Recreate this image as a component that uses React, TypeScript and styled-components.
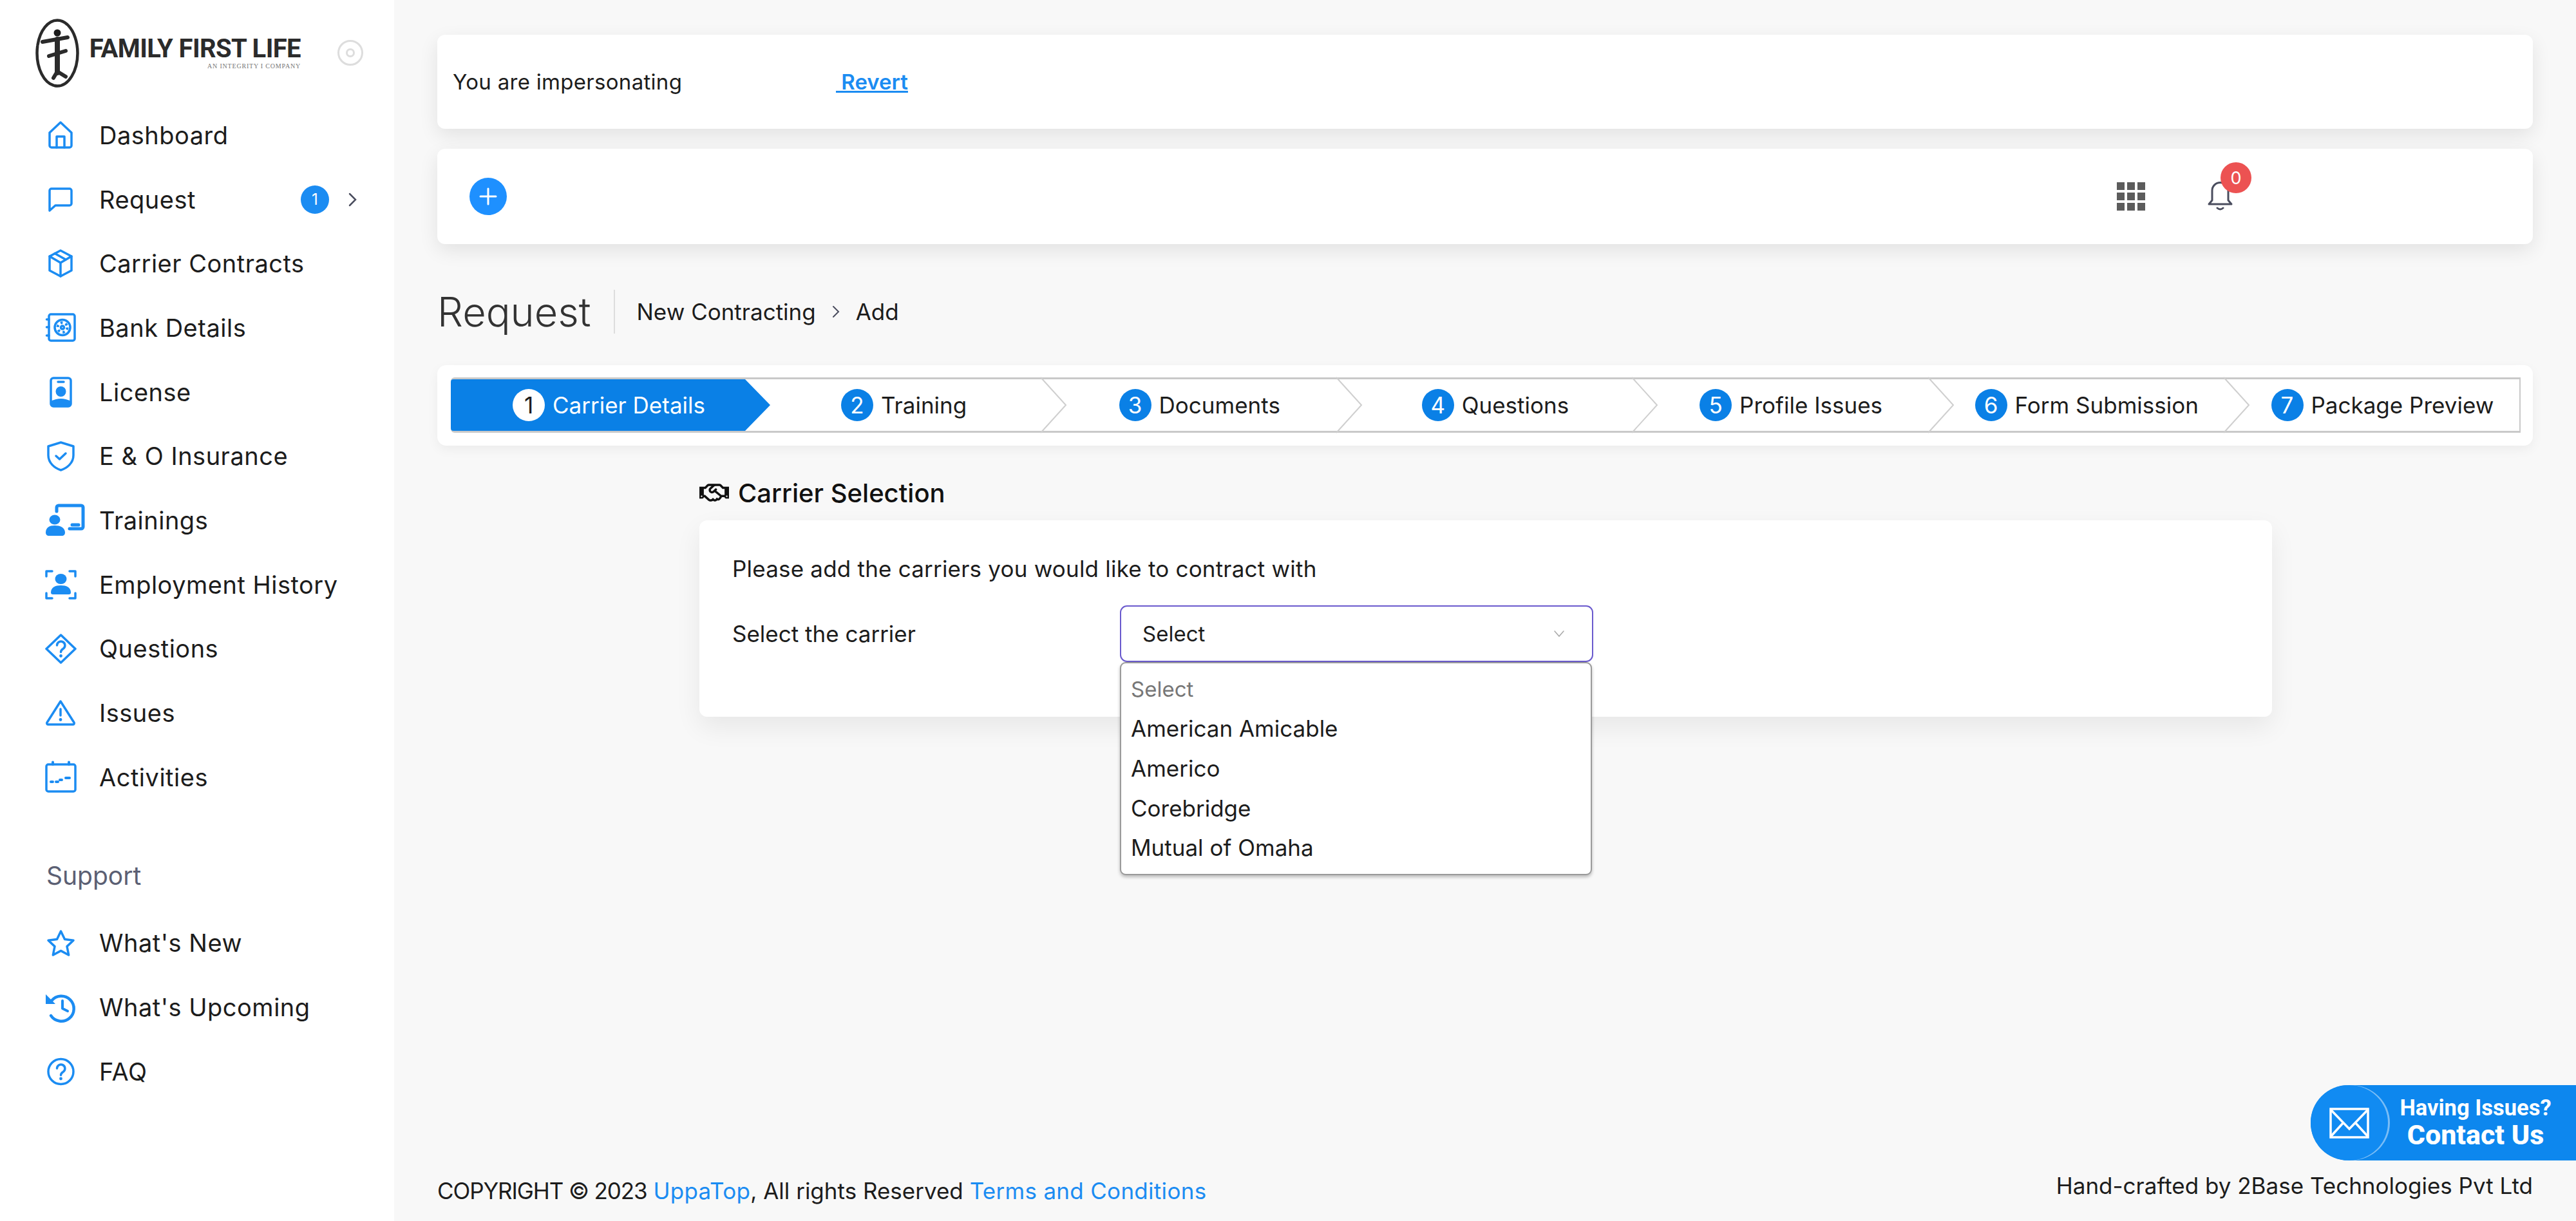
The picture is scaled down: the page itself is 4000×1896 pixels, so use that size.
import React from 'react';
import styled, { createGlobalStyle } from 'styled-components';
import { FaRegHandshake } from 'react-icons/fa';

const BLUE = '#1b8cf2';
const STEP_BLUE = '#0a80e6';
const FONT = `Inter, 'Noto Sans', sans-serif`;

const GlobalStyle = createGlobalStyle`
  html, body {
    margin: 0;
    padding: 0;
    background: #f8f8f8;
    font-family: ${FONT};
    color: #1c1c1c;
  }
  * { box-sizing: border-box; }
`;

const Glyph = styled.svg`
  display: block;
  flex-shrink: 0;
  fill: none;
  stroke: ${BLUE};
  stroke-width: 3.5;
  stroke-linecap: round;
  stroke-linejoin: round;
  overflow: visible;
  .solid { fill: ${BLUE}; stroke: none; }
`;

const icons: Record<string, React.ReactNode> = {
  home: (
    <Glyph width="38" height="43" viewBox="0 0 38 43">
      <path d="M2 18 L19 2 L36 18 V38 a3 3 0 0 1 -3 3 H5 a3 3 0 0 1 -3 -3 Z" />
      <path d="M13 41 V24 H25 V41" />
    </Glyph>
  ),
  chat: (
    <Glyph width="38" height="38" viewBox="0 0 38 38">
      <path d="M2 5 a3 3 0 0 1 3 -3 H33 a3 3 0 0 1 3 3 V25 a3 3 0 0 1 -3 3 H11 L2 36 Z" />
    </Glyph>
  ),
  box: (
    <Glyph width="38" height="44" viewBox="0 0 38 44">
      <path d="M19 2 L36 11 V33 L19 42 L2 33 V11 Z" />
      <path d="M2 11 L19 21 L36 11 M19 21 V42" />
      <path d="M10 6.5 L27 16" />
    </Glyph>
  ),
  safe: (
    <Glyph width="47" height="45" viewBox="0 0 47 45">
      <rect x="5" y="2" width="40" height="41" rx="3" />
      <path d="M1.5 10 H5 M1.5 22 H5 M1.5 35 H5" />
      <circle cx="26" cy="22.5" r="12" />
      <circle cx="26" cy="22.5" r="7.5" strokeDasharray="3.5 4.5" strokeWidth="4" strokeLinecap="butt" />
      <circle cx="26" cy="22.5" r="2.5" />
    </Glyph>
  ),
  license: (
    <Glyph width="35" height="48" viewBox="0 0 35 48">
      <rect x="2" y="2" width="31" height="44" rx="4" />
      <path d="M13 8 H22" />
      <circle className="solid" cx="17.5" cy="23" r="8" />
      <path className="solid" d="M2 38 Q17.5 30 33 38 V43 a3 3 0 0 1 -3 3 H5 a3 3 0 0 1 -3 -3 Z" />
    </Glyph>
  ),
  shield: (
    <Glyph width="43" height="47" viewBox="0 0 43 47">
      <path d="M21.5 2 L41 8 V22 C41 34 31 42 21.5 45 C12 42 2 34 2 22 V8 Z" />
      <path d="M14 23 L19.5 28 L29 19" />
    </Glyph>
  ),
  training: (
    <Glyph width="61" height="49" viewBox="0 0 61 49">
      <path strokeWidth="5" d="M18 11 V5 a3 3 0 0 1 3 -3 H56 a3 3 0 0 1 3 3 V35 a3 3 0 0 1 -3 3 H38" />
      <path strokeWidth="5" d="M42 32 H52" />
      <ellipse className="solid" cx="15" cy="24" rx="8.5" ry="7.5" />
      <path className="solid" d="M1 44 c0 -8 6 -11 14 -11 s16 3 16 11 c0 3 -2 5 -5 5 H6 c-3 0 -5 -2 -5 -5 Z" />
    </Glyph>
  ),
  employment: (
    <Glyph width="49" height="48" viewBox="0 0 49 48">
      <path d="M2 11 V3 H11 M38 3 H47 V11 M2 37 V45 H11 M38 45 H47 V37" />
      <ellipse className="solid" cx="24.5" cy="15" rx="9" ry="8" />
      <path className="solid" d="M9 36 c0 -8 7 -11 15.5 -11 s15.5 3 15.5 11 c0 2 -1 3 -3 3 H12 c-2 0 -3 -1 -3 -3 Z" />
    </Glyph>
  ),
  question: (
    <Glyph width="49" height="47" viewBox="0 0 49 47">
      <path d="M24.5 2 L47 23.5 L24.5 45 L2 23.5 Z" />
      <path d="M18.5 18 a6.2 6.2 0 1 1 9.5 5.5 c-2.2 1.3 -3.5 2.4 -3.5 5" />
      <circle className="solid" cx="24.5" cy="34.5" r="2.4" />
    </Glyph>
  ),
  warning: (
    <Glyph width="46" height="40" viewBox="0 0 46 40">
      <path d="M23 2 L44 35 a2 2 0 0 1 -1.5 3 H3.5 a2 2 0 0 1 -1.5 -3 Z" />
      <path d="M23 14 V24" />
      <circle className="solid" cx="23" cy="30.5" r="2.4" />
    </Glyph>
  ),
  calendar: (
    <Glyph width="49" height="49" viewBox="0 0 49 49">
      <rect x="2" y="5" width="45" height="42" rx="3" />
      <path strokeWidth="4" d="M12 1.5 V5 M37 1.5 V5" />
      <path strokeWidth="4" d="M9 32 H12 M17 32 H20 M23 29 H26 M32 26 H38" />
    </Glyph>
  ),
  star: (
    <Glyph width="43" height="41" viewBox="0 0 43 41">
      <path d="M21.5 2 L27.5 14.5 L41 16.3 L31 25.6 L33.7 39 L21.5 32.4 L9.3 39 L12 25.6 L2 16.3 L15.5 14.5 Z" />
    </Glyph>
  ),
  history: (
    <Glyph width="47" height="47" viewBox="0 0 47 47">
      <path strokeWidth="4.5" d="M9 13 A19.5 19.5 0 1 1 8 36" />
      <path className="solid" d="M0 3 L0 18 L15 18 Z" />
      <path strokeWidth="4" d="M26 13 V25 L34 29" />
    </Glyph>
  ),
  faq: (
    <Glyph width="43" height="44" viewBox="0 0 43 44">
      <circle cx="21.5" cy="22" r="19.5" />
      <path d="M15.5 17 a6.2 6.2 0 1 1 9.5 5.5 c-2.2 1.3 -3.5 2.4 -3.5 5" />
      <circle className="solid" cx="21.5" cy="33" r="2.4" />
    </Glyph>
  ),
};

const mainNav = [
  { label: 'Dashboard', icon: 'home' },
  { label: 'Request', icon: 'chat', badge: 1 },
  { label: 'Carrier Contracts', icon: 'box' },
  { label: 'Bank Details', icon: 'safe' },
  { label: 'License', icon: 'license' },
  { label: 'E & O Insurance', icon: 'shield' },
  { label: 'Trainings', icon: 'training', wide: true },
  { label: 'Employment History', icon: 'employment' },
  { label: 'Questions', icon: 'question' },
  { label: 'Issues', icon: 'warning' },
  { label: 'Activities', icon: 'calendar' },
];

const supportNav = [
  { label: "What's New", icon: 'star' },
  { label: "What's Upcoming", icon: 'history' },
  { label: 'FAQ', icon: 'faq' },
];

const steps = [
  'Carrier Details',
  'Training',
  'Documents',
  'Questions',
  'Profile Issues',
  'Form Submission',
  'Package Preview',
];

const carriers = ['American Amicable', 'Americo', 'Corebridge', 'Mutual of Omaha'];

interface NavEntry {
  label: string;
  icon: string;
  badge?: number;
  wide?: boolean;
}

const NavList = ({ items }: { items: NavEntry[] }) => (
  <nav>
    {items.map((item) => (
      <NavRow key={item.label}>
        <IconSlot $wide={item.wide}>{icons[item.icon]}</IconSlot>
        <NavLabel>{item.label}</NavLabel>
        {item.badge ? (
          <>
            <NavBadge>{item.badge}</NavBadge>
            <svg width="16" height="24" viewBox="0 0 16 24" fill="none" stroke="#4a4d5e" strokeWidth="2.5" strokeLinecap="round">
              <path d="M3 3 L12 12 L3 21" />
            </svg>
          </>
        ) : null}
      </NavRow>
    ))}
  </nav>
);

const Logo = () => (
  <svg width="68" height="107" viewBox="0 0 68 107" fill="none" stroke="#2b2b2b" strokeLinecap="round" strokeLinejoin="round">
    <ellipse cx="34" cy="53.5" rx="31.5" ry="51" strokeWidth="4.5" strokeDasharray="70 2" />
    <circle cx="34" cy="22" r="5.5" fill="#1c1c1c" stroke="none" />
    <path strokeWidth="6" d="M11 36 L50 29" />
    <path strokeWidth="8" d="M34 32 V84" />
    <path strokeWidth="6" d="M21 58 L47 50" />
    <path strokeWidth="6" d="M34 82 L28 92 M34 82 L47 90" />
  </svg>
);

export default function App() {
  return (
    <>
      <GlobalStyle />
      <Page>
        <Sidebar>
          <Brand>
            <Logo />
            <BrandText>
              <BrandName>FAMILY FIRST LIFE</BrandName>
              <BrandTag>AN INTEGRITY I COMPANY</BrandTag>
            </BrandText>
            <CollapseToggle />
          </Brand>
          <NavList items={mainNav} />
          <SupportTitle>Support</SupportTitle>
          <NavList items={supportNav} />
        </Sidebar>

        <Main>
          <Banner>
            <BannerText>You are impersonating</BannerText>
            <RevertLink href="#"> Revert</RevertLink>
          </Banner>

          <Toolbar>
            <AddButton>
              <svg width="30" height="30" viewBox="0 0 30 30" stroke="#fff" strokeWidth="3" strokeLinecap="round">
                <path d="M15 3 V27 M3 15 H27" />
              </svg>
            </AddButton>
            <ToolbarRight>
              <AppsGrid>
                {Array.from({ length: 9 }).map((_, i) => (
                  <AppsDot key={i} />
                ))}
              </AppsGrid>
              <BellWrap>
                <svg width="41" height="46" viewBox="0 0 41 46" fill="none" stroke="#4a4d5e" strokeWidth="3" strokeLinecap="round" strokeLinejoin="round">
                  <path d="M8 30 V15 a12.5 12.5 0 0 1 25 0 V30 L38 36 H3 Z" />
                  <path d="M16 42 Q20.5 46 25 42" />
                </svg>
                <BellBadge>0</BellBadge>
              </BellWrap>
            </ToolbarRight>
          </Toolbar>

          <PageHead>
            <PageTitle>Request</PageTitle>
            <Crumbs>
              <span>New Contracting</span>
              <svg width="14" height="22" viewBox="0 0 14 22" fill="none" stroke="#4a4d5e" strokeWidth="2" strokeLinecap="round">
                <path d="M3 3 L11 11 L3 19" />
              </svg>
              <span>Add</span>
            </Crumbs>
          </PageHead>

          <StepCard>
            <StepBar>
              {steps.map((label, i) => (
                <Step key={label} $active={i === 0}>
                  <StepNumber $active={i === 0}>{i + 1}</StepNumber>
                  <StepLabel>{label}</StepLabel>
                  {i < steps.length - 1 ? (
                    <StepArrow viewBox="0 0 40 80" preserveAspectRatio="none">
                      {i === 0 ? (
                        <polygon points="0,0 39,40 0,80" fill={STEP_BLUE} />
                      ) : (
                        <polyline points="0,-3 39,40 0,83" fill="none" stroke="#cfcfcf" strokeWidth="2" />
                      )}
                    </StepArrow>
                  ) : null}
                </Step>
              ))}
            </StepBar>
          </StepCard>

          <Section>
            <SectionTitle>
              <FaRegHandshake size={46} color="#111" />
              <span>Carrier Selection</span>
            </SectionTitle>
            <SectionCard>
              <Intro>Please add the carriers you would like to contract with</Intro>
              <FieldRow>
                <FieldLabel>Select the carrier</FieldLabel>
                <SelectWrap>
                  <SelectBox>
                    <span>Select</span>
                    <svg width="18" height="12" viewBox="0 0 18 12" fill="none" stroke="#a9a9a9" strokeWidth="1.5" strokeLinecap="round">
                      <path d="M2 2 L9 10 L16 2" />
                    </svg>
                  </SelectBox>
                  <Menu>
                    <Option $muted>Select</Option>
                    {carriers.map((name) => (
                      <Option key={name}>{name}</Option>
                    ))}
                  </Menu>
                </SelectWrap>
              </FieldRow>
            </SectionCard>
          </Section>

          <Footer>
            <FooterLeft>
              <CopyMark>COPYRIGHT © 2023</CopyMark> <FooterLink href="#">UppaTop</FooterLink>, All rights Reserved{' '}
              <FooterLink href="#">Terms and Conditions</FooterLink>
            </FooterLeft>
            <FooterRight>Hand-crafted by 2Base Technologies Pvt Ltd</FooterRight>
          </Footer>
        </Main>

        <ContactTab>
          <ContactCircle>
            <svg width="62" height="48" viewBox="0 0 62 48" fill="none" stroke="#fff" strokeWidth="3.5">
              <rect x="2" y="2" width="58" height="44" />
              <path d="M2 3 L31 33 L60 3 M2 45 L22 23 M60 45 L40 23" />
            </svg>
          </ContactCircle>
          <ContactText>
            <ContactSmall>Having Issues?</ContactSmall>
            <ContactBig>Contact Us</ContactBig>
          </ContactText>
        </ContactTab>
      </Page>
    </>
  );
}

const Page = styled.div`
  display: flex;
  width: 4000px;
  height: 1896px;
  overflow: hidden;
  position: relative;
  background: #f8f8f8;
`;

const Sidebar = styled.aside`
  width: 612px;
  flex-shrink: 0;
  background: #fff;
`;

const Brand = styled.div`
  display: flex;
  align-items: center;
  height: 160px;
  padding: 4px 48px 0 55px;
`;

const BrandText = styled.div`
  display: flex;
  flex-direction: column;
  align-items: flex-end;
  flex-shrink: 0;
  margin-left: 15px;
  width: 329px;
`;

const BrandName = styled.div`
  font-family: Roboto, sans-serif;
  font-weight: 700;
  font-size: 40px;
  line-height: 42px;
  letter-spacing: -0.6px;
  color: #2b2b2b;
  white-space: nowrap;
`;

const BrandTag = styled.div`
  font-family: 'Liberation Serif', serif;
  font-size: 10px;
  line-height: 12px;
  letter-spacing: 0.8px;
  color: #777;
  white-space: nowrap;
`;

const CollapseToggle = styled.div`
  position: relative;
  width: 40px;
  height: 40px;
  margin-left: auto;
  border: 3px solid #ddd;
  border-radius: 50%;

  &::after {
    content: '';
    position: absolute;
    inset: 10px;
    border: 3px solid #ddd;
    border-radius: 50%;
  }
`;

const NavRow = styled.div`
  display: flex;
  align-items: center;
  height: 99.7px;
  padding: 0 56px 0 70px;
`;

const IconSlot = styled.div<{ $wide?: boolean }>`
  display: flex;
  justify-content: ${({ $wide }) => ($wide ? 'flex-start' : 'center')};
  width: 48px;
  margin-right: 36px;
`;

const NavLabel = styled.span`
  font-size: 38px;
  line-height: 46px;
  letter-spacing: 0.5px;
  color: #1c1c1c;
  white-space: nowrap;
`;

const NavBadge = styled.span`
  display: flex;
  align-items: center;
  justify-content: center;
  width: 44px;
  height: 44px;
  margin-left: auto;
  margin-right: 29px;
  border-radius: 50%;
  background: ${BLUE};
  color: #fff;
  font-size: 24px;
`;

const SupportTitle = styled.div`
  margin: 80px 0 32px 72px;
  font-size: 39px;
  line-height: 46px;
  color: #5b5f73;
`;

const Main = styled.main`
  flex: 1;
  min-width: 0;
  display: flex;
  flex-direction: column;
  padding: 54px 67px 0;
`;

const Banner = styled.div`
  display: flex;
  align-items: center;
  flex-shrink: 0;
  height: 146px;
  padding-left: 24px;
  background: #fff;
  border-radius: 12px;
  box-shadow: 0 10px 30px rgba(0, 0, 0, 0.09);
`;

const BannerText = styled.span`
  width: 595px;
  font-size: 33px;
  letter-spacing: 0.3px;
`;

const RevertLink = styled.a`
  font-size: 33px;
  font-weight: 600;
  color: ${BLUE};
  white-space: pre;
`;

const Toolbar = styled.div`
  display: flex;
  align-items: center;
  flex-shrink: 0;
  height: 148px;
  margin-top: 31px;
  padding: 0 465px 0 50px;
  background: #fff;
  border-radius: 12px;
  box-shadow: 0 10px 30px rgba(0, 0, 0, 0.09);
`;

const AddButton = styled.div`
  display: flex;
  align-items: center;
  justify-content: center;
  width: 58px;
  height: 58px;
  border-radius: 50%;
  background: #1e90ff;
`;

const ToolbarRight = styled.div`
  display: flex;
  align-items: center;
  gap: 96px;
  margin-left: auto;
`;

const AppsGrid = styled.div`
  display: grid;
  grid-template-columns: repeat(3, 12px);
  grid-auto-rows: 12px;
  gap: 4px;
`;

const AppsDot = styled.span`
  background: #5c5c5c;
`;

const BellWrap = styled.div`
  position: relative;
  margin-top: 2px;
`;

const BellBadge = styled.span`
  position: absolute;
  left: 21px;
  top: -29px;
  display: flex;
  align-items: center;
  justify-content: center;
  width: 48px;
  height: 48px;
  border-radius: 50%;
  background: #ec5252;
  color: #fff;
  font-size: 27px;
`;

const PageHead = styled.div`
  display: flex;
  align-items: center;
  flex-shrink: 0;
  height: 68px;
  margin-top: 71px;
`;

const PageTitle = styled.h1`
  margin: 0;
  padding: 0 35px 0 0;
  font-size: 63px;
  line-height: 68px;
  font-weight: 300;
  color: #333;
  border-right: 2px solid #ddd;
`;

const Crumbs = styled.div`
  display: flex;
  align-items: center;
  gap: 24px;
  margin-left: 34px;
  font-size: 35px;
  color: #1c1c1c;
`;

const StepCard = styled.div`
  flex-shrink: 0;
  height: 125px;
  margin-top: 49px;
  padding: 19px 19px 20px 21px;
  background: #fff;
  border-radius: 14px;
  box-shadow: 0 6px 18px rgba(0, 0, 0, 0.05);
`;

const StepBar = styled.div`
  display: grid;
  grid-template-columns: 457px repeat(6, 1fr);
  height: 86px;
  border-top: 3px solid #c9c9c9;
  border-bottom: 3px solid #c9c9c9;
  border-right: 2px solid #c9c9c9;
  border-radius: 6px 0 0 6px;
`;

const Step = styled.div<{ $active?: boolean }>`
  position: relative;
  display: flex;
  align-items: center;
  justify-content: center;
  gap: 12px;
  padding-left: 34px;
  font-size: 35px;
  background: ${({ $active }) => ($active ? STEP_BLUE : 'transparent')};
  color: ${({ $active }) => ($active ? '#fff' : '#1c1c1c')};
  border-radius: ${({ $active }) => ($active ? '4px 0 0 4px' : '0')};
`;

const StepNumber = styled.span<{ $active?: boolean }>`
  display: flex;
  align-items: center;
  justify-content: center;
  width: 50px;
  height: 50px;
  border-radius: 50%;
  background: ${({ $active }) => ($active ? '#fff' : STEP_BLUE)};
  color: ${({ $active }) => ($active ? '#1c1c1c' : '#fff')};
  font-size: 35px;
`;

const StepLabel = styled.span`
  position: relative;
  z-index: 1;
  white-space: nowrap;
`;

const StepArrow = styled.svg`
  position: absolute;
  left: 100%;
  top: 0;
  width: 40px;
  height: 100%;
  overflow: visible;
  z-index: 2;
`;

const Section = styled.section`
  flex-shrink: 0;
  width: 2442px;
  margin: 50px 0 0 407px;
`;

const SectionTitle = styled.div`
  display: flex;
  align-items: center;
  gap: 14px;
  height: 46px;
  font-size: 40px;
  font-weight: 500;
  color: #111;
`;

const SectionCard = styled.div`
  height: 305px;
  margin-top: 20px;
  padding: 55px 51px 0;
  background: #fff;
  border-radius: 12px;
  box-shadow: 0 16px 40px rgba(0, 0, 0, 0.07);
`;

const Intro = styled.div`
  font-size: 35px;
  line-height: 40px;
  letter-spacing: 0.2px;
`;

const FieldRow = styled.div`
  display: flex;
  align-items: center;
  margin-top: 37px;
`;

const FieldLabel = styled.div`
  width: 602px;
  font-size: 35px;
`;

const SelectWrap = styled.div`
  position: relative;
  width: 735px;
`;

const SelectBox = styled.div`
  display: flex;
  align-items: center;
  justify-content: space-between;
  height: 88px;
  padding: 0 42px 0 33px;
  border: 2.5px solid #6a5acd;
  border-radius: 11px;
  font-size: 33px;
`;

const Menu = styled.div`
  position: absolute;
  left: 0;
  top: 88px;
  width: 733px;
  height: 331px;
  padding: 9px 0;
  background: #fff;
  border: 2px solid #9a9a9a;
  border-radius: 9px;
  box-shadow: 0 3px 5px rgba(0, 0, 0, 0.25);
  z-index: 3;
`;

const Option = styled.div<{ $muted?: boolean }>`
  display: flex;
  align-items: center;
  height: 61.6px;
  padding-left: 15px;
  font-size: ${({ $muted }) => ($muted ? '33px' : '35px')};
  color: ${({ $muted }) => ($muted ? '#777' : '#1c1c1c')};
`;

const Footer = styled.footer`
  display: flex;
  align-items: flex-end;
  justify-content: space-between;
  margin-top: auto;
  padding-bottom: 27px;
  font-size: 35px;
  line-height: 40px;
`;

const FooterLeft = styled.div``;

const CopyMark = styled.span`
  letter-spacing: -1.1px;
`;

const FooterLink = styled.a`
  color: ${BLUE};
  text-decoration: none;
  letter-spacing: 0.3px;
`;

const FooterRight = styled.div`
  margin-bottom: 8px;
`;

const ContactTab = styled.div`
  position: absolute;
  right: 0;
  bottom: 94px;
  display: flex;
  align-items: center;
  width: 412px;
  height: 117px;
  background: #0d87ee;
  border-radius: 58px 0 0 58px;
`;

const ContactCircle = styled.div`
  display: flex;
  align-items: center;
  justify-content: center;
  width: 120px;
  height: 117px;
  flex-shrink: 0;
  border-radius: 50%;
  background: #118bf2;
  box-shadow: 3px 0 0 rgba(255, 255, 255, 0.45);
`;

const ContactText = styled.div`
  display: flex;
  flex-direction: column;
  align-items: center;
  width: 232px;
  margin: -4px 0 0 20px;
  font-family: Roboto, sans-serif;
  font-weight: 700;
  color: #fff;
`;

const ContactSmall = styled.span`
  font-size: 34.5px;
  line-height: 40px;
  white-space: nowrap;
`;

const ContactBig = styled.span`
  font-size: 43px;
  line-height: 44px;
  font-weight: 800;
  white-space: nowrap;
`;
